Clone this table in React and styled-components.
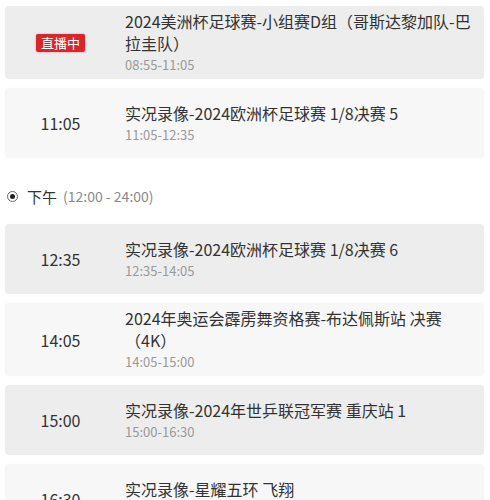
import React from "react";
import styled, { createGlobalStyle } from "styled-components";

const Global = createGlobalStyle`
  html, body { margin: 0; padding: 0; background: #fff; }
  body { font-family: "Noto Sans CJK SC", "Noto Sans", sans-serif; color: #333; }
`;

const Page = styled.div`
  padding: 6px 6px 0 5px;
  display: flex;
  flex-direction: column;
`;

const List = styled.div`
  display: flex;
  flex-direction: column;
  gap: 9px;
`;

const Card = styled.div`
  display: flex;
  align-items: center;
  min-height: 70px;
  box-sizing: border-box;
  padding: 4px 0;
  border-radius: 4px;
  background: ${(p) => (p.$dark ? "#ededed" : "#f7f7f7")};
  box-shadow: ${(p) => (p.$dark ? "0 0 2px rgba(0,0,0,0.03)" : "0 0 2px rgba(0,0,0,0.04)")};
`;

const TimeCol = styled.div`
  width: 111px;
  flex: none;
  display: flex;
  justify-content: center;
  align-items: center;
  font-size: 16px;
  color: #333;
`;

const Badge = styled.span`
  display: inline-flex;
  align-items: center;
  justify-content: center;
  height: 18px;
  padding: 0 5px;
  border-radius: 2px;
  background: #d8262c;
  color: #fff;
  font-size: 13px;
  line-height: 18px;
  box-shadow: 0 0 2px rgba(216, 38, 44, 0.5);
`;

const Info = styled.div`
  flex: 1;
  min-width: 0;
  padding: 0 10px 0 9px;
  display: flex;
  flex-direction: column;
`;

const Title = styled.div`
  font-size: 16px;
  line-height: 22px;
  color: #333;
`;

const Sub = styled.div`
  font-size: 13px;
  line-height: 20px;
  margin-top: 1px;
  color: #9a9a9a;
`;

const Header = styled.div`
  display: flex;
  align-items: center;
  height: 20px;
  margin: 28px 0 18px 2px;
`;

const Radio = styled.span`
  width: 11px;
  height: 11px;
  box-sizing: border-box;
  border: 1px solid #666;
  border-radius: 50%;
  display: inline-flex;
  align-items: center;
  justify-content: center;
  margin-right: 9px;
  &::after {
    content: "";
    width: 5px;
    height: 5px;
    border-radius: 50%;
    background: #222;
  }
`;

const HeaderLabel = styled.span`
  font-size: 15px;
  color: #333;
`;

const HeaderRange = styled.span`
  font-size: 14px;
  color: #8a8a8a;
  margin-left: 6px;
`;

const morning = [
  { live: true, title: "2024美洲杯足球赛-小组赛D组（哥斯达黎加队-巴拉圭队）", range: "08:55-11:05" },
  { time: "11:05", title: "实况录像-2024欧洲杯足球赛 1/8决赛 5", range: "11:05-12:35" },
];

const afternoon = [
  { time: "12:35", title: "实况录像-2024欧洲杯足球赛 1/8决赛 6", range: "12:35-14:05" },
  { time: "14:05", title: "2024年奥运会霹雳舞资格赛-布达佩斯站 决赛（4K）", range: "14:05-15:00" },
  { time: "15:00", title: "实况录像-2024年世乒联冠军赛 重庆站 1", range: "15:00-16:30" },
  { time: "16:30", title: "实况录像-星耀五环 飞翔", range: "16:30-17:30" },
];

function Row({ item, dark }) {
  return (
    <Card $dark={dark}>
      <TimeCol>{item.live ? <Badge>直播中</Badge> : item.time}</TimeCol>
      <Info>
        <Title>{item.title}</Title>
        <Sub>{item.range}</Sub>
      </Info>
    </Card>
  );
}

export default function App() {
  return (
    <>
      <Global />
      <Page>
        <List>
          {morning.map((it, i) => (
            <Row key={i} item={it} dark={i % 2 === 0} />
          ))}
        </List>
        <Header>
          <Radio />
          <HeaderLabel>下午</HeaderLabel>
          <HeaderRange>(12:00 - 24:00)</HeaderRange>
        </Header>
        <List>
          {afternoon.map((it, i) => (
            <Row key={i} item={it} dark={i % 2 === 0} />
          ))}
        </List>
      </Page>
    </>
  );
}
